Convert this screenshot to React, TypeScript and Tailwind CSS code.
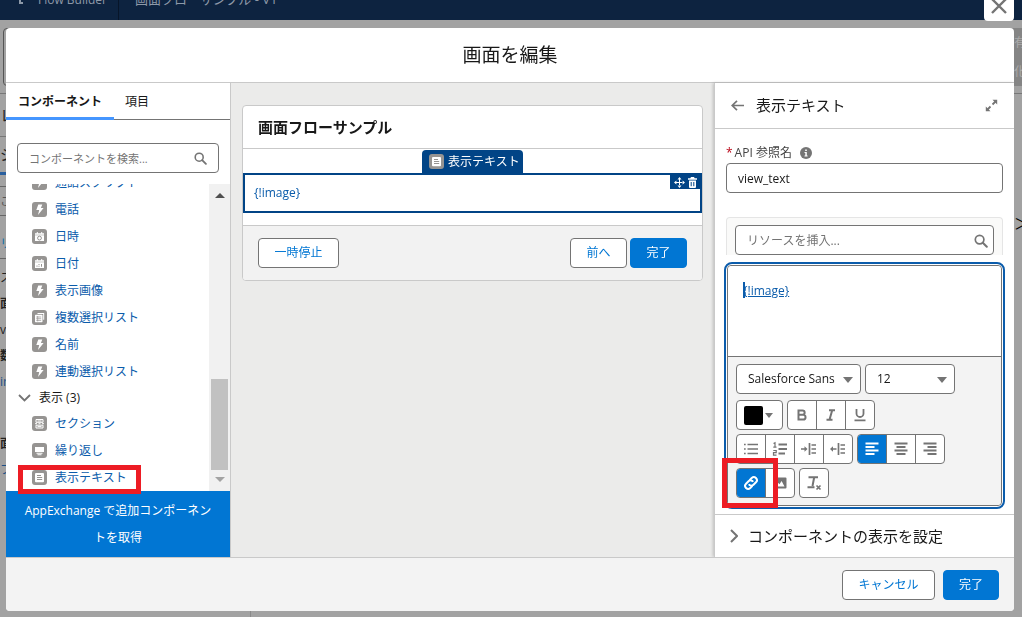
import { ReactNode } from "react";
import clsx from "clsx";

type IconName = "bolt" | "clock" | "date" | "multi" | "section" | "repeater" | "text";

const inputs: { label: string; icon: IconName }[] = [
  { label: "通話スクリプト", icon: "bolt" },
  { label: "電話", icon: "bolt" },
  { label: "日時", icon: "clock" },
  { label: "日付", icon: "date" },
  { label: "表示画像", icon: "bolt" },
  { label: "複数選択リスト", icon: "multi" },
  { label: "名前", icon: "bolt" },
  { label: "連動選択リスト", icon: "bolt" },
];

const displays: { label: string; icon: IconName }[] = [
  { label: "セクション", icon: "section" },
  { label: "繰り返し", icon: "repeater" },
  { label: "表示テキスト", icon: "text" },
];

const glyphs: Record<IconName, ReactNode> = {
  bolt: <path d="M6.3 2.5h4L8.900 6h2.700L6 13l1.200-5H4.300z" fill="#fff" />,
  clock: (
    <>
      <path d="M3 4.2h9v1.5H3zM4.8 3h1v1.5h-1zM9.2 3h1v1.5h-1zM3 6.3h9V12H3z" fill="#fff" />
      <circle cx="7.5" cy="9.1" r="1.9" fill="none" stroke="#969492" />
    </>
  ),
  date: (
    <>
      <path d="M3 4.2h9v1.5H3zM4.8 3h1v1.5h-1zM9.2 3h1v1.5h-1zM3 6.3h9V12H3z" fill="#fff" />
      <path d="M4.5 9.5h1v1.3h-1zM6.5 8h1v1h-1zM6.5 9.8h1v1h-1zM9 8h1v2.8H9z" fill="#969492" />
    </>
  ),
  multi: (
    <>
      <path d="M5.5 3h6.7v6.7h-1V4H5.5z" fill="#fff" />
      <rect x="3" y="4.8" width="7.5" height="7.4" rx=".6" fill="#fff" />
      <path d="M4.2 7h5M4.2 8.7h5M4.2 10.4h5M5.7 6v5.4" stroke="#969492" strokeWidth=".7" />
    </>
  ),
  section: (
    <g fill="none" stroke="#fff" strokeWidth="1">
      <path d="M4 3.5h7v2.8H4zM4 9.2h7v2.8H4zM3 7.7h2M6.5 7.7h2M10 7.7h2M5.5 5h4M5.5 10.6h4" />
    </g>
  ),
  repeater: (
    <path d="M3 4h9v5H3zM4.5 9.7h6v1H4.5zM5.5 11.2h4v1h-4z" fill="#fff" />
  ),
  text: (
    <>
      <rect x="3" y="3" width="9" height="9.3" rx="1" fill="#fff" />
      <path d="M5 5.5h4M5 7.5h5.2M5 9.5h5.2" stroke="#969492" strokeWidth="1" />
    </>
  ),
};

function TypeIcon({ name }: { name: IconName }) {
  return (
    <svg viewBox="0 0 15 15" className="size-[15px] shrink-0">
      <rect width="15" height="15" rx="3" fill="#969492" />
      {glyphs[name]}
    </svg>
  );
}

function SearchIcon({ className }: { className: string }) {
  return (
    <svg viewBox="0 0 14 14" className={className} fill="none" stroke="#747474">
      <circle cx="5.6" cy="5.6" r="4.3" strokeWidth="1.7" />
      <path d="M8.8 8.8l4 4" strokeWidth="2" strokeLinecap="round" />
    </svg>
  );
}

function ComponentItem({ label, icon }: { label: string; icon: IconName }) {
  return (
    <li className="flex h-[27px] items-center gap-2 pl-[26px]">
      <TypeIcon name={icon} />
      <a href="#" className="text-[#0b5cab]">{label}</a>
    </li>
  );
}

function Button({ primary, className, children }: { primary?: boolean; className: string; children: ReactNode }) {
  return (
    <button
      className={clsx(
        "h-[30px] shrink-0 rounded border",
        primary ? "border-[#0176d3] bg-[#0176d3] text-white" : "border-[#747474] bg-white text-[#0176d3]",
        className
      )}
    >
      {children}
    </button>
  );
}

function ToolGroup({ children }: { children: ReactNode }) {
  return (
    <div className="flex h-[30px] divide-x divide-[#747474] overflow-hidden rounded border border-[#747474] bg-white">
      {children}
    </div>
  );
}

function Tool({ label, active, children }: { label: string; active?: boolean; children: ReactNode }) {
  return (
    <button
      aria-label={label}
      className={clsx(
        "flex w-[29px] items-center justify-center last:w-7",
        active ? "bg-[#0176d3] text-white" : "text-[#747474]"
      )}
    >
      <svg viewBox="0 0 16 16" className="size-4" fill="none" stroke="currentColor" strokeWidth="1.6">
        {children}
      </svg>
    </button>
  );
}

/* Flow Builder page that stays dimmed behind the dialog */
function Background() {
  return (
    <div className="flex h-screen flex-col overflow-hidden bg-[#a2a2a2] text-[#222]">
      <div className="flex h-5 shrink-0 bg-[#0d2340] text-[#8d99a8]">
        <div className="-mt-3 flex h-8 w-[119px] items-center gap-3.5 border-r border-[#071529] pb-2 pl-3.5">
          <svg viewBox="0 0 10 10" className="size-2.5" fill="none" stroke="currentColor" strokeWidth="2">
            <path d="M1 2h5v6h3" />
          </svg>
          <span className="whitespace-nowrap text-[12px]">Flow Builder</span>
        </div>
        <div className="-mt-3 flex h-6 items-center pl-4 text-[13px]">画面フローサンプル - V1</div>
      </div>
      <div className="flex h-[74px] shrink-0 justify-between border-b border-[#777] pt-2 pb-[7px] pl-[3px]">
        <div className="w-40 rounded border border-[#555]" />
        <div className="flex w-4 flex-col justify-around bg-[#858585] pl-2 text-[#aaa]">
          <span className="w-3">有</span>
          <span className="w-3">化</span>
        </div>
      </div>
      <div className="flex flex-1">
        <div className="flex w-[251px] flex-col border-r border-[#8a8a8a]">
          <div className="h-[43px] border-b border-[#777] text-[15px] leading-[42px]">レ</div>
          <div className="h-[38px] border-b-3 border-[#2a5f9e] text-[15px] leading-[34px]">ジ</div>
          <div className="h-3 border-b border-[#666]" />
          <div className="h-[29px] border-b border-[#666] leading-[29px] text-[#555]">この</div>
          <div className="h-[43px] border-b border-[#666] leading-[56px] text-[#0c6fa8]">リソ</div>
          <div className="flex flex-col leading-[26px]">
            <span className="pt-1.5">ス</span>
            <b>面</b>
            <span>vi</span>
            <b>数</b>
            <span className="text-[#1b4f86]">ir</span>
            <b className="pt-9">面</b>
            <span className="text-[#1b4f86]">フ</span>
          </div>
        </div>
        <div className="flex flex-1 justify-end pt-[118px]">
          <span className="w-2 text-[15px] text-black">＞</span>
        </div>
      </div>
    </div>
  );
}

function Palette() {
  return (
    <aside className="relative flex w-[225px] shrink-0 flex-col border-r border-[#c9c9c9] bg-white">
      <div className="flex h-[37px] border-b border-[#747474]">
        <button className="-mb-px w-[108px] border-b-3 border-[#4596ff] pt-1 font-bold">コンポーネント</button>
        <button className="pt-px pl-[11px]">項目</button>
      </div>
      <div className="relative mx-[11px] mt-[23px]">
        <input
          aria-label="コンポーネントを検索"
          placeholder="コンポーネントを検索..."
          className="h-[30px] w-full rounded border border-[#747474] pr-8 pl-[11px] text-[11px] placeholder:text-[#747474]"
        />
        <SearchIcon className="absolute top-[9px] right-3 size-[13px]" />
      </div>
      <div className="mt-[11px] flex min-h-0 flex-1">
        <div className="min-w-0 flex-1 overflow-hidden">
          <ul className="-mt-[15px]">
            {inputs.map((item) => (
              <ComponentItem key={item.label} {...item} />
            ))}
          </ul>
          <button className="flex h-[25px] items-center gap-2 pl-3">
            <svg viewBox="0 0 13 8" className="h-2 w-[13px]" fill="none" stroke="#747474" strokeWidth="1.8">
              <path d="M1 1l5.5 5.5L12 1" />
            </svg>
            表示 (3)
          </button>
          <ul>
            {displays.map((item) => (
              <ComponentItem key={item.label} {...item} />
            ))}
          </ul>
        </div>
        <div className="flex w-[21px] flex-col items-center bg-[#f1f1f1] py-[9px]">
          <svg viewBox="0 0 10 5" className="h-[5px] w-2.5"><path d="M0 5l5-5 5 5z" fill="#505050" /></svg>
          <div className="mt-auto mb-[7px] h-[91px] w-[17px] bg-[#c1c1c1]" />
          <svg viewBox="0 0 10 5" className="h-[5px] w-2.5"><path d="M0 0l5 5 5-5z" fill="#a3a3a3" /></svg>
        </div>
      </div>
      <a href="#" className="bg-[#0176d3] px-4 py-1.5 text-center leading-[27px] text-white">
        AppExchange で追加コンポーネントを取得
      </a>
      <div className="pointer-events-none absolute bottom-[63px] left-3 h-[29px] w-[123px] border-5 border-[#ed1c24]" />
    </aside>
  );
}

function Canvas() {
  return (
    <main className="min-w-0 flex-1 bg-[#ebebea] px-[11px] pt-[22px]">
      <div className="overflow-hidden rounded border border-[#c9c9c9] bg-white">
        <h2 className="flex h-[43px] items-center border-b border-[#c9c9c9] px-[15px] text-[15px] font-bold">
          画面フローサンプル
        </h2>
        <div className="pt-px pb-3">
          <div className="mx-auto flex h-[23px] w-[101px] items-center gap-1 rounded-t bg-[#014486] pl-[7px] whitespace-nowrap text-white">
            <TypeIcon name="text" />
            <span>表示テキスト</span>
          </div>
          <div className="relative flex h-10 items-center border-2 border-[#014486] px-[9px]">
            <a href="#" className="text-[#0b5cab]">{"{!image}"}</a>
            <div className="absolute top-0 right-0 flex h-3.5 items-center gap-0.5 bg-[#014486] pr-0.5 pl-1">
              <button aria-label="移動">
                <svg viewBox="0 0 11 11" className="size-[11px]" fill="#fff">
                  <path d="M5 2h1v3h3v1H6v3H5V6H2V5h3zM5.5 0l2 2.4h-4zM5.5 11l2-2.4h-4zM0 5.5l2.4-2v4zM11 5.5l-2.4-2v4z" />
                </svg>
              </button>
              <button aria-label="削除">
                <svg viewBox="0 0 11 11" className="size-[11px]" fill="#fff">
                  <path d="M4 0h3l.7 1.3H10v1.4H1V1.3h2.3zM2 3.5h7V10q0 1-1 1H3q-1 0-1-1z" />
                  <path d="M4.2 5v4.2M6.8 5v4.2" stroke="#014486" strokeWidth="1" />
                </svg>
              </button>
            </div>
          </div>
        </div>
        <div className="flex h-[55px] items-center gap-[3px] border-t border-[#c9c9c9] bg-[#f2f2f2] px-[15px]">
          <Button className="mr-auto w-[81px]">一時停止</Button>
          <Button className="w-[57px]">前へ</Button>
          <Button primary className="w-[57px]">完了</Button>
        </div>
      </div>
    </main>
  );
}

function Picker({ label, value, className }: { label: string; value: string; className: string }) {
  return (
    <div className={clsx("relative", className)}>
      <select
        aria-label={label}
        className="h-[30px] w-full appearance-none rounded border border-[#747474] bg-white pl-[11px] text-[12px]"
      >
        <option>{value}</option>
      </select>
      <svg viewBox="0 0 10 6" className="pointer-events-none absolute top-[13px] right-2 h-1.5 w-2.5">
        <path d="M0 0h10L5 6z" fill="#747474" />
      </svg>
    </div>
  );
}

function Editor() {
  return (
    <div className="-mx-0.5 mt-[7px] rounded-lg border-2 border-[#0b5cab] p-px">
      <div className="rounded border border-[#747474]">
        <div className="flex h-[90px] items-start rounded-t bg-white px-[15px] pt-4">
          <span className="h-4 w-0.5 bg-[#0b5cab]" />
          <a href="#" className="-ml-0.5 leading-[18px] text-[#0b5cab] underline">{"{!image}"}</a>
        </div>
        <div className="relative flex flex-col gap-1 rounded-b border-t border-[#747474] bg-[#f3f3f3] px-2 pt-[7px] pb-[7px]">
          <div className="mb-0.5 flex gap-1">
            <Picker label="フォント" value="Salesforce Sans" className="w-[125px]" />
            <Picker label="サイズ" value="12" className="w-[90px]" />
          </div>
          <div className="flex gap-1">
            <button
              aria-label="文字色"
              className="flex h-[30px] w-[47px] items-center gap-0.5 rounded border border-[#747474] bg-white pl-[7px]"
            >
              <span className="size-[19px] rounded-xs bg-black" />
              <svg viewBox="0 0 8 5" className="h-[5px] w-2"><path d="M0 0h8L4 5z" fill="#747474" /></svg>
            </button>
            <ToolGroup>
              <Tool label="太字">
                <path d="M4.500 3.500h4a2.100 2.100 0 0 1 0 4.300h-4zM4.500 7.800h4.700a2.300 2.300 0 0 1 0 4.700H4.500z" strokeWidth="2" />
              </Tool>
              <Tool label="斜体">
                <path d="M6 3.200h6M3.500 12.800h6M9.200 3.200L6.500 12.800" strokeWidth="2" />
              </Tool>
              <Tool label="下線">
                <path d="M4.500 2v4.500a3.500 3.500 0 0 0 7 0V2M2.500 13.400h11" strokeWidth="1.800" />
              </Tool>
            </ToolGroup>
          </div>
          <div className="flex gap-1">
            <ToolGroup>
              <Tool label="箇条書き">
                <path d="M1 3.500h1.700M4.500 3.500H15M1 8h1.700M4.500 8H15M1 12.500h1.700M4.500 12.500H15" strokeWidth="1.500" />
              </Tool>
              <Tool label="番号付きリスト">
                <path d="M6.500 3.500H15M6.500 8H15M6.500 12.500H13" strokeWidth="1.800" />
                <path d="M1.500 2.500L3 1.800V6.200M1.300 6.200h3.200M1.300 9.500h2.900v2.200H1.500v2.500h3" strokeWidth="1.200" />
              </Tool>
              <Tool label="インデント">
                <path d="M0 8h5M8.500 2v12M10.500 4H15M10.500 8H15M10.500 12H15" strokeWidth="1.700" />
                <path d="M3.500 5.200L6.500 8l-3 2.800z" fill="currentColor" stroke="none" />
              </Tool>
              <Tool label="インデント解除">
                <path d="M1.500 8h5M8.500 2v12M10.500 4H15M10.500 8H15M10.500 12H15" strokeWidth="1.700" />
                <path d="M3 5.200L0 8l3 2.800z" fill="currentColor" stroke="none" />
              </Tool>
            </ToolGroup>
            <ToolGroup>
              <Tool label="左揃え" active>
                <path d="M1.500 2.500h13M1.500 6h9M1.500 9.500h13M1.500 13h9" strokeWidth="2" />
              </Tool>
              <Tool label="中央揃え">
                <path d="M1.500 2.500h13M3.500 6h9M1.500 9.500h13M3.500 13h9" strokeWidth="1.800" />
              </Tool>
              <Tool label="右揃え">
                <path d="M1.500 2.500h13M5.500 6h9M1.500 9.500h13M5.500 13h9" strokeWidth="1.800" />
              </Tool>
            </ToolGroup>
          </div>
          <div className="flex gap-1">
            <ToolGroup>
              <Tool label="リンク" active>
                <g transform="rotate(-45 8 8)" strokeWidth="2">
                  <path d="M7 11H4a3 3 0 0 1 0-6h3.500a3 3 0 0 1 2.900 3.700" />
                  <path d="M9 5h3a3 3 0 0 1 0 6H8.500a3 3 0 0 1-2.900-3.700" />
                </g>
              </Tool>
              <Tool label="画像">
                <path
                  d="M2.500 2.500h11q1 0 1 1v9q0 1-1 1h-11q-1 0-1-1v-9q0-1 1-1zM3.500 11.500h9L9.600 6 7.500 9.300 6 7.800z"
                  fill="currentColor"
                  fillRule="evenodd"
                  stroke="none"
                />
              </Tool>
            </ToolGroup>
            <ToolGroup>
              <Tool label="書式を削除">
                <path d="M2.500 2.200H12M8.200 2.200L6.500 11M1.500 12.300h7" strokeWidth="2" />
                <path d="M10.500 10.500l4 4M14.500 10.500l-4 4" strokeWidth="1.700" />
              </Tool>
            </ToolGroup>
          </div>
          <div className="pointer-events-none absolute -bottom-[3px] -left-1.5 h-[50px] w-14 border-5 border-[#ed1c24]" />
        </div>
      </div>
    </div>
  );
}

function PropertyPanel() {
  return (
    <aside className="flex w-[300px] shrink-0 flex-col border-l border-[#c9c9c9] bg-white shadow-[-1px_0_3px_rgba(0,0,0,0.2)]">
      <div className="flex h-[46px] shrink-0 items-center border-b border-[#c9c9c9] pr-4 pl-4">
        <button aria-label="戻る">
          <svg viewBox="0 0 13 11" className="h-[11px] w-[13px]" fill="none" stroke="#747474" strokeWidth="1.7">
            <path d="M1 5.500h12M6 .8L1.200 5.500 6 10.200" />
          </svg>
        </button>
        <h2 className="ml-3 text-[15px]">表示テキスト</h2>
        <button aria-label="拡大" className="ml-auto">
          <svg viewBox="0 0 13 13" className="size-[13px]" fill="#747474">
            <path d="M7.500.8h4.700v4.700zM.8 7.500v4.700h4.700z" />
            <path d="M7.500 5.500l3-3M2.500 10.500l3-3" stroke="#747474" strokeWidth="1.800" />
          </svg>
        </button>
      </div>
      <div className="flex-1 px-[11px] pt-[13px]">
        <div className="flex h-[21px] items-center">
          <label htmlFor="apiName" className="text-[#444]">
            <span className="mr-0.5 text-[#ba0517]">*</span>API 参照名
          </label>
          <svg viewBox="0 0 12 12" className="ml-2 size-3">
            <circle cx="6" cy="6" r="6" fill="#747474" />
            <path d="M5.200 2.500h1.600v1.600H5.200zM4.500 5h2.300v3.500h.8v1H4.500v-1h.8V6h-.8z" fill="#fff" />
          </svg>
        </div>
        <input
          id="apiName"
          defaultValue="view_text"
          className="block h-[30px] w-full rounded border border-[#747474] px-[11px]"
        />
        <div className="mt-6 rounded-t border border-b-0 border-[#e5e5e5] bg-[#fafaf9] px-2 pt-[7px]">
          <div className="relative">
            <input
              aria-label="リソースを挿入"
              placeholder="リソースを挿入..."
              className="block h-[30px] w-full rounded border border-[#747474] bg-white pr-8 pl-[11px] placeholder:text-[#747474]"
            />
            <SearchIcon className="absolute top-[9px] right-1.5 size-3.5" />
          </div>
        </div>
        <Editor />
      </div>
      <button className="flex h-[43px] shrink-0 items-center gap-2.5 border-t border-[#c9c9c9] pl-[15px] text-[15px]">
        <svg viewBox="0 0 8 14" className="h-3.5 w-2" fill="none" stroke="#747474" strokeWidth="2">
          <path d="M1 1l6 6-6 6" />
        </svg>
        コンポーネントの表示を設定
      </button>
    </aside>
  );
}

export default function App() {
  return (
    <div className="font-['Open_Sans','Noto_Sans_CJK_JP',sans-serif] text-[12px] text-[#181818]">
      <Background />
      <div className="fixed inset-0 flex flex-col pt-7 pr-2 pb-1.5 pl-1.5">
        <button
          aria-label="閉じる"
          className="absolute top-0 right-2 flex h-[21px] w-[30px] justify-center rounded-b bg-white"
        >
          <svg viewBox="0 0 16 14" className="h-3.5 w-4" fill="none" stroke="#747474" strokeWidth="2.400">
            <path d="M1-1l14 14M15-1L1 13" />
          </svg>
        </button>
        <div role="dialog" aria-label="画面を編集" className="flex min-h-0 flex-1 flex-col overflow-hidden rounded bg-white">
          <header className="flex h-[55px] shrink-0 items-center justify-center border-b border-[#c9c9c9]">
            <h1 className="text-[19px]">画面を編集</h1>
          </header>
          <div className="flex min-h-0 flex-1">
            <Palette />
            <Canvas />
            <PropertyPanel />
          </div>
          <footer className="flex h-[54px] shrink-0 items-center justify-end gap-2 border-t border-[#c9c9c9] bg-[#f3f3f3] pr-[15px]">
            <Button className="w-[93px]">キャンセル</Button>
            <Button primary className="w-14">完了</Button>
          </footer>
        </div>
      </div>
    </div>
  );
}
